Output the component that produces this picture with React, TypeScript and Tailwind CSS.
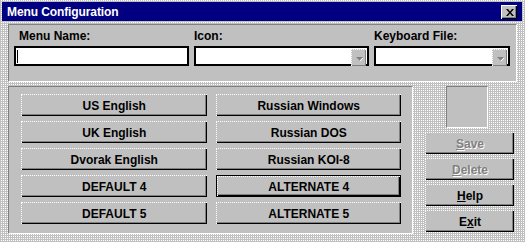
import React from 'react';

const dither = 'bg-[repeating-conic-gradient(#ffffff_0_25%,#c0c0c0_0_100%)] bg-[length:2px_2px]';
const font = "font-['Liberation_Sans',Arial,sans-serif]";

const Btn: React.FC<{ children: React.ReactNode; focused?: boolean; className?: string }> = ({ children, focused, className }) => {
  const face = (
    <div className="h-full flex items-center justify-center bg-[#c0c0c0] border-t border-l border-dotted border-white shadow-[inset_-1px_-1px_#000,inset_-2px_-2px_#808080] text-[12px] font-bold text-black">
      {children}
    </div>
  );
  if (focused) {
    return <div className={`h-[22px] border border-black ${className || ''}`}>{face}</div>;
  }
  return <div className={`h-[22px] ${className || ''}`}>{face}</div>;
};

const DropBtn: React.FC = () => (
  <div className="w-[15px] h-[17px] mt-[1px] mr-[1px] bg-[#c0c0c0] border-t border-l border-dotted border-white shadow-[inset_-1px_-1px_#808080] flex items-center justify-center">
    <svg width="9" height="5" viewBox="0 0 9 5">
      <polygon points="1,1 8,1 4.5,4.5" fill="#808080" />
      <line x1="5" y1="5" x2="8" y2="2" stroke="#ffffff" strokeWidth="1" />
    </svg>
  </div>
);

const App: React.FC = () => {
  const left = ['US English', 'UK English', 'Dvorak English', 'DEFAULT 4', 'DEFAULT 5'];
  const right = ['Russian Windows', 'Russian DOS', 'Russian KOI-8', 'ALTERNATE 4', 'ALTERNATE 5'];

  return (
    <div className={`w-[525px] h-[242px] ${dither} ${font} relative`}>
      {/* title bar */}
      <div className="absolute left-[2px] top-[2px] w-[520px] h-[19px] bg-[#000080] flex items-center justify-between pl-[5px] pr-[5px]">
        <span className="text-white font-bold text-[12px] tracking-[-0.1px]">Menu Configuration</span>
        <div className="w-[16px] h-[14px] bg-[#c0c0c0] border-t border-l border-white shadow-[inset_-1px_-1px_#000,inset_-2px_-2px_#808080] flex items-center justify-center">
          <svg width="8" height="7" viewBox="0 0 8 7">
            <path d="M0 0 L2 0 L4 2.5 L6 0 L8 0 L5 3.5 L8 7 L6 7 L4 4.5 L2 7 L0 7 L3 3.5 Z" fill="#000" />
          </svg>
        </div>
      </div>

      <div className="absolute left-[8px] top-[24px] right-[8px] bottom-[8px] flex flex-col gap-[4px]">
        {/* top panel */}
        <div className="h-[58px] bg-[#c0c0c0] border-t border-l border-[#808080] border-b-white border-r-white border-b border-r pt-[3px] pl-[5px] pr-[6px] flex gap-[5px]">
          <div className="w-[175px] flex flex-col">
            <div className="text-[12px] font-bold pl-[5px] h-[16px] leading-[16px]">Menu Name:</div>
            <div className="mt-[2px] h-[20px] bg-white border-2 border-black flex items-center pl-[1px]">
              <div className="w-[1px] h-[13px] bg-black" />
            </div>
          </div>
          <div className="w-[175px] flex flex-col">
            <div className="text-[12px] font-bold h-[16px] leading-[16px]">Icon:</div>
            <div className="mt-[2px] h-[20px] bg-white border-2 border-black flex justify-end items-start">
              <DropBtn />
            </div>
          </div>
          <div className="flex-1 flex flex-col">
            <div className="text-[12px] font-bold h-[16px] leading-[16px]">Keyboard File:</div>
            <div className="mt-[2px] h-[20px] bg-white border-2 border-black flex justify-end items-start">
              <DropBtn />
            </div>
          </div>
        </div>

        {/* bottom area */}
        <div className="flex-1 flex">
          <div className="w-[405px] bg-[#c0c0c0] border-t border-l border-[#808080] border-b-white border-r-white border-b border-r pt-[7px] pl-[12px] pr-[11px] grid grid-cols-2 gap-x-[9px] gap-y-[5px] content-start">
            {left.map((l, i) => (
              <React.Fragment key={l}>
                <Btn>{l}</Btn>
                <Btn focused={right[i] === 'ALTERNATE 4'}>{right[i]}</Btn>
              </React.Fragment>
            ))}
          </div>
          <div className="flex-1 flex flex-col pl-[12px] pr-[3px]">
            <div className="self-start ml-[21px] w-[42px] h-[42px] bg-[#c0c0c0] border-t border-l border-[#808080] border-b border-r border-b-white border-r-white" />
            <div className="mt-[4px] flex flex-col gap-[4px]">
              <Btn>
                <span className="text-[#808080] [text-shadow:1px_1px_#fff]"><u>S</u>ave</span>
              </Btn>
              <Btn>
                <span className="text-[#808080] [text-shadow:1px_1px_#fff]"><u>D</u>elete</span>
              </Btn>
              <Btn>
                <span><u>H</u>elp</span>
              </Btn>
              <Btn>
                <span>E<u>x</u>it</span>
              </Btn>
            </div>
          </div>
        </div>
      </div>
    </div>
  );
};

export default App;
